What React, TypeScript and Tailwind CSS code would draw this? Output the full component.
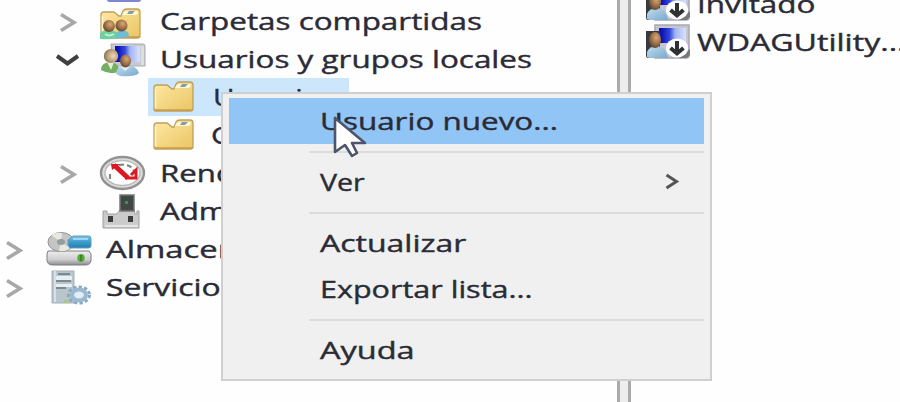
import { useLayoutEffect, useRef, type ReactNode } from 'react';

/** Single-line label stretched horizontally so that it fills `width`. */
function Label({ text, width }: { text: string; width: number }) {
  const ref = useRef<HTMLSpanElement>(null);
  useLayoutEffect(() => {
    const el = ref.current;
    if (el) el.style.transform = `scaleX(${width / el.offsetWidth})`;
  }, [width]);
  return (
    <span ref={ref} className="inline-block shrink-0 origin-left scale-x-100 whitespace-nowrap">
      {text}
    </span>
  );
}

function Chevron({ open = false }: { open?: boolean }) {
  return open ? (
    <svg className="h-6 w-7 shrink-0" viewBox="0 0 28 24" fill="none">
      <path d="M3 9 13.500 16.500 24 9" stroke="#404040" strokeWidth="4" />
    </svg>
  ) : (
    <svg className="h-6 w-7 shrink-0" viewBox="0 0 28 24" fill="none">
      <path d="M7 5.500 20 13.500 7 21.500" stroke="#a8a8a8" strokeWidth="3.6" />
    </svg>
  );
}

function Defs() {
  return (
    <svg className="absolute size-0">
      <defs>
        <linearGradient id="fold" x1="0" y1="0" x2="1" y2="1">
          <stop offset="0" stopColor="#ffe9a5" />
          <stop offset="1" stopColor="#eac562" />
        </linearGradient>
        <linearGradient id="screen" x1="0" y1="0" x2="1" y2="0">
          <stop offset="0.1" stopColor="#0d12b4" />
          <stop offset="0.4" stopColor="#3448dc" />
          <stop offset="0.6" stopColor="#a0b4f5" />
          <stop offset="1" stopColor="#dae2fb" />
        </linearGradient>
        <linearGradient id="metal" x1="0" y1="0" x2="0" y2="1">
          <stop offset="0" stopColor="#eeeeee" />
          <stop offset="0.6" stopColor="#cfcfd2" />
          <stop offset="1" stopColor="#8c8c90" />
        </linearGradient>
        <linearGradient id="blue" x1="0" y1="0" x2="0" y2="1">
          <stop offset="0" stopColor="#7fc4e4" />
          <stop offset="0.5" stopColor="#3c9dcc" />
          <stop offset="1" stopColor="#257daf" />
        </linearGradient>
        <radialGradient id="face" cx="0.6" cy="0.35" r="0.7">
          <stop offset="0" stopColor="#d6a878" />
          <stop offset="0.55" stopColor="#9f7146" />
          <stop offset="1" stopColor="#544434" />
        </radialGradient>
        <radialGradient id="fair" cx="0.65" cy="0.5" r="0.7">
          <stop offset="0" stopColor="#f0d8b8" />
          <stop offset="0.6" stopColor="#b79b73" />
          <stop offset="1" stopColor="#786446" />
        </radialGradient>
        <linearGradient id="shirt" x1="0" y1="0" x2="1" y2="1">
          <stop offset="0" stopColor="#c3def0" />
          <stop offset="1" stopColor="#78a8cc" />
        </linearGradient>
      </defs>
    </svg>
  );
}

function FolderShape() {
  return (
    <>
      <path d="M3 9Q3 6 6 6H16L21 10H23L25 5Q26 3 29 3H39Q42 3 42 6V30Q42 32 39 32H5Q3 32 3 30Z" fill="url(#fold)" stroke="#bda05c" strokeWidth="1.3" />
      <path d="M25 7Q26 5 29 5H38Q40 5 40 7L38 9H24Z" fill="#fff7d5" />
      <path d="M31 5H37L34 8H29Z" fill="#7f9eaa" />
      <path d="M4.500 10V29" stroke="#fff4c6" strokeWidth="1.5" />
      <path d="M4 31H41" stroke="#c89d47" strokeWidth="1.5" />
    </>
  );
}

function Icon({ children }: { children: ReactNode }) {
  return (
    <svg className="h-9 w-[46px] shrink-0 overflow-visible" viewBox="0 0 46 36">
      {children}
    </svg>
  );
}

const FolderIcon = () => (
  <Icon>
    <FolderShape />
  </Icon>
);

const ViewerIcon = () => (
  <Icon>
    <path d="M7 4H41V35Q41 37 37 37H11Q7 37 7 35Z" fill="#7d86cf" />
    <path d="M12 8H36V31H12Z" fill="#dfe3f7" />
  </Icon>
);

const SharedIcon = () => (
  <Icon>
    <g transform="translate(-2 3)">
      <FolderShape />
    </g>
    <path d="M0 36V31Q0 28 8 27Q16 27 18 31V35Q10 37 0 36Z" fill="#70cfa0" />
    <path d="M15 34Q16 27 23 27Q29 28 29 33Q24 36 16 35Z" fill="#70bcd0" />
    <ellipse cx="9" cy="23" rx="6" ry="6" fill="url(#face)" />
    <ellipse cx="21.500" cy="22.500" rx="6" ry="6" fill="url(#face)" />
    <path d="M5 31Q9 34 14 31" stroke="#c3efd4" strokeWidth="2" fill="none" />
  </Icon>
);

const UsersIcon = () => (
  <Icon>
    <path d="M11 3H43Q45 3 45 5V25H13Z" fill="#c9c9d2" stroke="#aaaab4" />
    <path d="M15 5H40V21H15Z" fill="url(#screen)" />
    <path d="M41 5H44V24H41Z" fill="#dededf" />
    <path d="M1 29Q1 22 9 21Q17 21 19 27V31Q9 34 1 29Z" fill="#75ae65" />
    <path d="M7 21 11 29 14 21Z" fill="#e5f0d0" />
    <ellipse cx="11" cy="15" rx="7.200" ry="7" fill="url(#fair)" />
    <path d="M16 33Q16 25 27 24Q37 25 39 32Q35 36 20 35Z" fill="url(#shirt)" />
    <path d="M21 26 25 30 30 26Z" fill="#e5f1f9" />
    <ellipse cx="25.500" cy="20" rx="5.500" ry="6.500" fill="url(#face)" />
  </Icon>
);

const GaugeIcon = () => (
  <Icon>
    <ellipse cx="22.500" cy="18" rx="21.500" ry="16" fill="#ddd" stroke="#929292" strokeWidth="2.400" />
    <ellipse cx="22.500" cy="18" rx="17.500" ry="12.500" fill="#fff" stroke="#bbb" strokeWidth="1.500" />
    <path d="M10 24V17M19 10Q30 8 34 16" stroke="#7d8b80" strokeWidth="2.200" fill="none" strokeDasharray="5 3" />
    <path d="M14 10 28 23" stroke="#db1721" strokeWidth="5" />
    <path d="M11 9H20L12 15Z" fill="#db1721" />
    <path d="M25 23H36V15L31 20" stroke="#db1721" strokeWidth="3" fill="none" />
  </Icon>
);

const DeviceIcon = () => (
  <Icon>
    <path d="M3 18H7V21H17L20 17H34L35 21H37V18H39V35H3Z" fill="#cbcbcb" stroke="#a0a0a0" />
    <path d="M20 2H34V18H20Z" fill="#414844" stroke="#777" strokeWidth="1.500" />
    <path d="M25 8H28V11H25Z" fill="#35945a" />
    <path d="M8 23H13V29H8ZM28 23H33V29H28Z" fill="#3c3c3c" />
    <path d="M5 33H38" stroke="#eee" strokeWidth="1.500" />
  </Icon>
);

const StorageIcon = () => (
  <Icon>
    <path d="M2 20H43L45 23V29Q45 34 39 34H7Q1 34 1 29V23Z" fill="url(#metal)" stroke="#7e7e82" />
    <ellipse cx="15" cy="11" rx="13" ry="9.500" fill="#c5c5c5" stroke="#929292" />
    <path d="M15 11 5 4Q10 1 16 2ZM15 11 24 17Q20 21 13 20Z" fill="#e9e7e2" />
    <ellipse cx="15" cy="11" rx="4" ry="3" fill="#969b9b" />
    <path d="M22 9 27 5H43Q45 5 45 8V15Q45 17 42 17H24L22 14Z" fill="url(#blue)" stroke="#5c9dba" />
    <path d="M27 8H42" stroke="#b5e2f5" strokeWidth="1.500" />
    <ellipse cx="35" cy="27" rx="3.700" ry="4" fill="#56ac35" />
    <path d="M35 24V30" stroke="#2f792c" strokeWidth="1.500" />
  </Icon>
);

const ServicesIcon = () => (
  <Icon>
    <path d="M6 2H28V34H6Z" fill="#b8c5cc" stroke="#a4b1b8" />
    <path d="M8 7H26V11H8ZM8 15H26V18H8Z" fill="#e8eff1" />
    <path d="M12 5H24M9 12H25M9 19H20" stroke="#657680" strokeWidth="1.600" />
    <path d="M9 2V33" stroke="#d7e0e4" strokeWidth="2" />
    <ellipse cx="33" cy="26" rx="10.500" ry="8" fill="none" stroke="#87a9c4" strokeWidth="3" strokeDasharray="3.200 2.200" />
    <ellipse cx="33" cy="26" rx="7" ry="5.500" fill="#e2eef5" stroke="#9ab8d0" strokeWidth="4" />
    <path d="M18 31H23V34H18Z" fill="#a8c78c" />
  </Icon>
);

const DisabledUserIcon = () => (
  <Icon>
    <path d="M10 1H44V32Q44 34 41 34H10Z" fill="#c5c6d2" stroke="#a7a8ae" strokeWidth="1.500" />
    <path d="M14 4H41V19H14Z" fill="url(#screen)" />
    <path d="M1 7H15V34H3Q1 34 1 31Z" fill="#393a3d" />
    <path d="M2 33V28Q4 22 13 22Q21 23 23 34H4Z" fill="url(#shirt)" />
    <ellipse cx="10" cy="16" rx="6" ry="8" fill="url(#face)" />
    <path d="M34 34H42L45 31V25Z" fill="#77797d" />
    <ellipse cx="32" cy="24" rx="11" ry="9.500" fill="#fff" />
    <path d="M32 17V29M25.500 24 32 29.500 38.500 24" stroke="#303134" strokeWidth="4" fill="none" />
  </Icon>
);

type NodeProps = {
  icon: ReactNode;
  text?: string;
  width?: number;
  level: 0 | 1 | 2;
  open?: boolean;
  leaf?: boolean;
};

const indent = ['pl-0', 'pl-[54px]', 'pl-[105px]'];

function TreeRow({ icon, text, width = 0, level, open, leaf }: NodeProps) {
  return (
    <div className={`flex h-[38px] shrink-0 items-center ${indent[level]}`}>
      <div className="flex w-[46px] shrink-0">{!leaf && <Chevron open={open} />}</div>
      {icon}
      <div className="flex pl-3.5">{text && <Label text={text} width={width} />}</div>
    </div>
  );
}

function MenuItem({ text, width, active, submenu }: { text: string; width: number; active?: boolean; submenu?: boolean }) {
  return (
    <div className={`flex h-[46px] items-center justify-between pl-[91px] pr-6 ${active ? 'bg-[#91c5f5]' : ''}`}>
      <Label text={text} width={width} />
      {submenu && (
        <svg className="h-5 w-4" viewBox="0 0 16 20" fill="none">
          <path d="M2.500 3 12.500 9.500 2.500 16" stroke="#555" strokeWidth="3" />
        </svg>
      )}
    </div>
  );
}

const Separator = () => (
  <div className="flex h-[15px] items-center pl-20">
    <div className="h-0.5 grow bg-[#dcdcdc]" />
  </div>
);

export default function App() {
  return (
    <div className="relative flex h-[402px] w-[900px] overflow-hidden bg-[#fefefe] font-['Open_Sans',sans-serif] text-[23.500px] font-medium leading-[38px] text-[#2b2b36] [-webkit-text-stroke:0.4px_#2b2b36]">
      <Defs />
      <div className="-mt-[36px] flex w-[617px] shrink-0 flex-col overflow-hidden">
        <TreeRow level={1} leaf icon={<ViewerIcon />} />
        <TreeRow level={1} icon={<SharedIcon />} text="Carpetas compartidas" width={322} />
        <TreeRow level={1} open icon={<UsersIcon />} text="Usuarios y grupos locales" width={372} />
        <div className="flex h-[38px] shrink-0 pl-[148px]">
          <div className="flex w-[201px] items-center bg-[#cce6fc] pl-[3px]">
            <FolderIcon />
            <div className="flex pl-4">
              <Label text="Usuarios" width={122} />
            </div>
          </div>
        </div>
        <TreeRow level={2} leaf icon={<FolderIcon />} text="Grupos" width={104} />
        <TreeRow level={1} icon={<GaugeIcon />} text="Rendimiento" width={186} />
        <TreeRow level={1} leaf icon={<DeviceIcon />} text="Administrador" width={210} />
        <TreeRow level={0} icon={<StorageIcon />} text="Almacenamiento" width={258} />
        <TreeRow level={0} icon={<ServicesIcon />} text="Servicios" width={130} />
      </div>
      <div className="w-3.5 shrink-0 border-x-[3px] border-[#aaaaaa] bg-[#ededed]" />
      <div className="-mt-[15px] flex grow flex-col overflow-hidden pl-3.5">
        <div className="flex h-[38px] shrink-0 items-center gap-1.5">
          <DisabledUserIcon />
          <Label text="Invitado" width={119} />
        </div>
        <div className="flex h-[38px] shrink-0 items-center gap-1.5">
          <DisabledUserIcon />
          <Label text="WDAGUtility..." width={209} />
        </div>
      </div>

      <div className="absolute left-[221px] top-[92px] flex h-[289px] w-[491px] flex-col border-2 border-[#cfcfcf] bg-[#f0f0f0] px-1.5 py-1">
        <MenuItem active text="Usuario nuevo..." width={238} />
        <Separator />
        <MenuItem submenu text="Ver" width={45} />
        <Separator />
        <MenuItem text="Actualizar" width={147} />
        <MenuItem text="Exportar lista..." width={213} />
        <Separator />
        <MenuItem text="Ayuda" width={94} />
      </div>

      <svg className="absolute left-[331px] top-[114px] h-[48px] w-[40px]" viewBox="0 0 40 48">
        <path d="M4 4V38L14 31L21 42L26 39L21 29H34Z" fill="#fff" stroke="#4c556b" strokeWidth="2.600" strokeLinejoin="round" />
      </svg>
    </div>
  );
}
